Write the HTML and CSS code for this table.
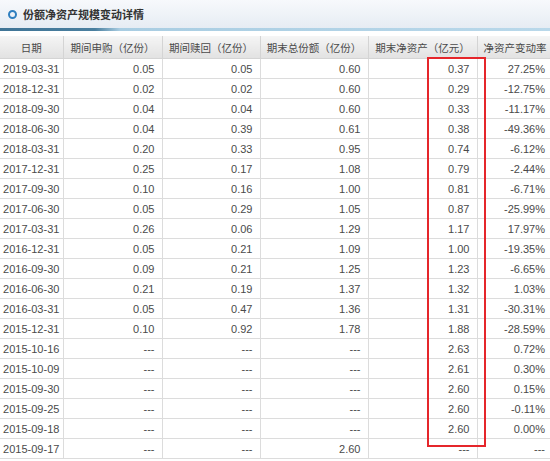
FILE: index.html
```html
<!DOCTYPE html>
<html lang="zh">
<head>
<meta charset="utf-8">
<title>份额净资产规模变动详情</title>
<link rel="stylesheet" href="styles.css">
</head>
<body>
<div class="panel">
  <div class="titlebar">
    <span class="dot"></span>
    <span class="title">份额净资产规模变动详情</span>
  </div>
  <div class="titleline"></div>
  <div class="tablewrap">
    <table class="grid">
      <colgroup>
        <col class="c1"><col class="c2"><col class="c3"><col class="c4"><col class="c5"><col class="c6">
      </colgroup>
      <thead>
        <tr>
          <th>日期</th>
          <th>期间申购（亿份）</th>
          <th>期间赎回（亿份）</th>
          <th>期末总份额（亿份）</th>
          <th>期末净资产（亿元）</th>
          <th class="last">净资产变动率</th>
        </tr>
      </thead>
      <tbody>
        <tr><td class="date">2019-03-31</td><td>0.05</td><td>0.05</td><td>0.60</td><td>0.37</td><td>27.25%</td></tr>
        <tr><td class="date">2018-12-31</td><td>0.02</td><td>0.02</td><td>0.60</td><td>0.29</td><td>-12.75%</td></tr>
        <tr><td class="date">2018-09-30</td><td>0.04</td><td>0.04</td><td>0.60</td><td>0.33</td><td>-11.17%</td></tr>
        <tr><td class="date">2018-06-30</td><td>0.04</td><td>0.39</td><td>0.61</td><td>0.38</td><td>-49.36%</td></tr>
        <tr><td class="date">2018-03-31</td><td>0.20</td><td>0.33</td><td>0.95</td><td>0.74</td><td>-6.12%</td></tr>
        <tr><td class="date">2017-12-31</td><td>0.25</td><td>0.17</td><td>1.08</td><td>0.79</td><td>-2.44%</td></tr>
        <tr><td class="date">2017-09-30</td><td>0.10</td><td>0.16</td><td>1.00</td><td>0.81</td><td>-6.71%</td></tr>
        <tr><td class="date">2017-06-30</td><td>0.05</td><td>0.29</td><td>1.05</td><td>0.87</td><td>-25.99%</td></tr>
        <tr><td class="date">2017-03-31</td><td>0.26</td><td>0.06</td><td>1.29</td><td>1.17</td><td>17.97%</td></tr>
        <tr><td class="date">2016-12-31</td><td>0.05</td><td>0.21</td><td>1.09</td><td>1.00</td><td>-19.35%</td></tr>
        <tr><td class="date">2016-09-30</td><td>0.09</td><td>0.21</td><td>1.25</td><td>1.23</td><td>-6.65%</td></tr>
        <tr><td class="date">2016-06-30</td><td>0.21</td><td>0.19</td><td>1.37</td><td>1.32</td><td>1.03%</td></tr>
        <tr><td class="date">2016-03-31</td><td>0.05</td><td>0.47</td><td>1.36</td><td>1.31</td><td>-30.31%</td></tr>
        <tr><td class="date">2015-12-31</td><td>0.10</td><td>0.92</td><td>1.78</td><td>1.88</td><td>-28.59%</td></tr>
        <tr><td class="date">2015-10-16</td><td>---</td><td>---</td><td>---</td><td>2.63</td><td>0.72%</td></tr>
        <tr><td class="date">2015-10-09</td><td>---</td><td>---</td><td>---</td><td>2.61</td><td>0.30%</td></tr>
        <tr><td class="date">2015-09-30</td><td>---</td><td>---</td><td>---</td><td>2.60</td><td>0.15%</td></tr>
        <tr><td class="date">2015-09-25</td><td>---</td><td>---</td><td>---</td><td>2.60</td><td>-0.11%</td></tr>
        <tr><td class="date">2015-09-18</td><td>---</td><td>---</td><td>---</td><td>2.60</td><td>0.00%</td></tr>
        <tr><td class="date">2015-09-17</td><td>---</td><td>---</td><td>2.60</td><td>---</td><td>---</td></tr>
      </tbody>
    </table>
    <div class="highlight"></div>
  </div>
</div>
</body>
</html>
```
FILE: styles.css
```css
html, body {
  margin: 0;
  padding: 0;
  background: #ffffff;
}
body {
  width: 550px;
  height: 461px;
  overflow: hidden;
  font-family: "Liberation Sans", Arial, "Noto Sans CJK SC", sans-serif;
}
.panel {
  width: 550px;
}
.titlebar {
  height: 28px;
  display: flex;
  align-items: center;
  padding-left: 8px;
  gap: 6px;
  background: linear-gradient(to bottom, #f7f9fc 0%, #e6ecf3 100%);
}
.dot {
  width: 5px;
  height: 5px;
  border: 2px solid #2f7fbf;
  border-radius: 50%;
  flex: none;
}
.title {
  font-family: "Noto Sans CJK SC", sans-serif;
  font-size: 11px;
  font-weight: bold;
  color: #333333;
}
.titleline {
  height: 3px;
  background: linear-gradient(to right, #3f7496 0, #4a7f9f 95px, #a9cde2 120px, #b9d8ea 100%);
}
.tablewrap {
  position: relative;
  margin-top: 5px;
}
.grid {
  width: 550px;
  border-collapse: collapse;
  table-layout: fixed;
  font-size: 11px;
  color: #4a4a4a;
}
.c1 { width: 63px; }
.c2 { width: 99px; }
.c3 { width: 98px; }
.c4 { width: 108px; }
.c5 { width: 109px; }
.c6 { width: 73px; }
.grid th {
  height: 22px;
  padding: 0;
  font-family: "Noto Sans CJK SC", sans-serif;
  font-weight: normal;
  font-size: 10.5px;
  color: #4a4a4a;
  text-align: center;
  white-space: nowrap;
  overflow: hidden;
  background: linear-gradient(to bottom, #f5f5f5 0%, #e2e2e2 100%);
  border-left: 1px solid #d4d4d4;
  border-bottom: 1px solid #d4d4d4;
}
.grid th.last {
  text-align: left;
  padding-left: 6px;
}
.grid th:first-child,
.grid td:first-child {
  border-left: none;
}
.grid td {
  height: 19px;
  padding: 0 7px 0 0;
  text-align: right;
  white-space: nowrap;
  border-left: 1px solid #dcdcdc;
  border-bottom: 1px solid #dcdcdc;
}
.grid td.date {
  text-align: center;
  padding: 0;
}
.grid td:last-child {
  padding-right: 5px;
}
.highlight {
  position: absolute;
  left: 427px;
  top: 21px;
  width: 55px;
  height: 386px;
  border: 2px solid #e5262b;
  pointer-events: none;
}
```
